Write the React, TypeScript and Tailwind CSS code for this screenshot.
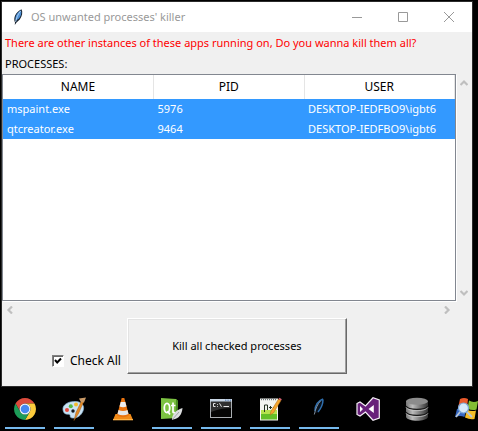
import { useState } from "react";
import type { ReactNode } from "react";

const rows = [
  { name: "mspaint.exe", pid: "5976", user: "DESKTOP-IEDFBO9\\igbt6" },
  { name: "qtcreator.exe", pid: "9464", user: "DESKTOP-IEDFBO9\\igbt6" },
];

function Feather({ className }: { className: string }) {
  return (
    <svg viewBox="0 0 16 18" className={className} aria-hidden="true">
      <path d="M4.8 17 L5 14.5 C3 10 5.5 4 11.5 1.2 C13 4 12.2 8 9.8 11.5 L6.5 14.5 Z" fill="#16202c" />
      <path d="M5.6 12.8 C4.6 8.5 7 4.6 11 2.2 C11.9 5 11 8.3 8.8 10.8 Z" fill="#4b8fd6" />
      <path d="M5.6 14 C6.4 10 8 6 10.6 3" stroke="#b4d4f2" strokeWidth="0.9" fill="none" />
    </svg>
  );
}

function DarkFeather() {
  return (
    <svg viewBox="0 0 24 24" className="size-6" aria-hidden="true">
      <path d="M7.5 16 C7 9 10 4 16.5 1.5 C17.5 6 15 11.5 11 15.5 Z" fill="#0a1420" />
      <path d="M8 14 C8 8.5 11 4 16 2 M11 15 C14 11.5 16 7 16 2.5" stroke="#2f6fae" strokeWidth="1.4" fill="none" />
      <path d="M7.3 17.5 C8.5 12 10.5 7 13.5 4" stroke="#8b9aa8" strokeWidth="0.9" fill="none" />
    </svg>
  );
}

function Chrome() {
  return (
    <svg viewBox="0 0 24 24" className="size-6" aria-hidden="true">
      <path d="M2.5 6.5 A11 11 0 0 1 21.5 6.5 L12 6.5 A5.5 5.5 0 0 0 7.2 14.7 Z" fill="#db4a3c" />
      <path d="M21.5 6.5 A11 11 0 0 1 12 23 L16.8 14.7 A5.5 5.5 0 0 0 12 6.5 Z" fill="#fccc3c" />
      <path d="M12 23 A11 11 0 0 1 2.5 6.5 L7.2 14.7 A5.5 5.5 0 0 0 16.8 14.7 Z" fill="#1d9c58" />
      <circle cx="12" cy="12" r="5.5" fill="#f4f6f8" />
      <circle cx="12" cy="12" r="4.3" fill="#4688f1" />
    </svg>
  );
}

function Paint() {
  return (
    <svg viewBox="0 0 24 24" className="size-6" aria-hidden="true">
      <path d="M1 13 C0 7 8 4 14 4.5 C20 5 23 9 21 14 C19 19 14 22 9.5 20.8 C7 20 9.5 17.5 6.5 17.2 C3 17.5 1.5 16 1 13 Z" fill="#c9e2f3" stroke="#8ab4d4" strokeWidth="0.7" />
      <circle cx="5" cy="13" r="2" fill="#e5483d" />
      <circle cx="8.8" cy="9.2" r="2" fill="#56b844" />
      <circle cx="14" cy="7.5" r="2" fill="#f3bb2e" />
      <circle cx="11" cy="14" r="1.7" fill="#10151b" />
      <path d="M12 23.5 L14 15.5 L19.5 4 L21.5 5 L16.5 16.5 Z" fill="#e38a25" stroke="#9a5a1c" strokeWidth="0.5" />
      <path d="M18.8 5 L17 1.5 L24 0.5 L22 5.5 Z" fill="#c99a67" />
    </svg>
  );
}

function Cone() {
  return (
    <svg viewBox="0 0 24 24" className="size-6" aria-hidden="true">
      <path d="M4.5 17 L19.5 17 L22 23 L2 23 Z" fill="#f08a17" />
      <path d="M10.7 1 L13.3 1 L18 18.5 Q12 22 6 18.5 Z" fill="#e9730f" />
      <path d="M9.7 5 L14.3 5 L15.5 9.5 Q12 11 8.5 9.5 Z" fill="#eceef0" />
      <path d="M7.5 13 Q12 15 16.5 13 L17.5 17 Q12 19.5 6.5 17 Z" fill="#e4e6e8" />
      <path d="M2 22 L22 22 L22 23.3 L2 23.3 Z" fill="#ffb347" />
    </svg>
  );
}

function Qt() {
  return (
    <svg viewBox="0 0 24 24" className="size-6" aria-hidden="true">
      <path d="M1 1 L16 2 L18 4 L17 21 L1 22 Z" fill="#7cc242" />
      <path d="M16 2 L18 4 L17 21 L15.5 20 Z" fill="#4b8f24" />
      <ellipse cx="7" cy="11" rx="2.7" ry="4.6" fill="none" stroke="#fff" strokeWidth="1.8" />
      <path d="M7.5 14 L10 17.5 M13 5.5 L13 15 Q13 16 15 15.5 M11 8.5 L15.5 8.5" fill="none" stroke="#fff" strokeWidth="1.7" />
      <path d="M12 23 C12 16 17 13 22.5 11 C22 17 19 22 13 22.5 Z" fill="#dcdedf" />
      <path d="M12 23 L19 15" stroke="#8e9295" strokeWidth="0.8" />
    </svg>
  );
}

function Console() {
  return (
    <svg viewBox="0 0 24 24" className="size-6" aria-hidden="true">
      <rect x="1.5" y="2.5" width="21" height="18" fill="#050505" stroke="#a9adb1" />
      <rect x="1" y="2" width="22" height="2.6" fill="#c9d6e5" />
      <path d="M16 3.2 H22" stroke="#4b76b0" strokeDasharray="1.4 1" />
      <path d="M2 5 H22 V11 Q12 11 2 15 Z" fill="#303030" />
      <path d="M6.5 6.5 H4.5 V9.5 H6.5 M8.5 7 V7.8 M8.5 9 V9.8 M10.5 6.3 L12.5 9.8 M14.5 9.5 H20" stroke="#e7e7e7" strokeWidth="1" fill="none" />
    </svg>
  );
}

function Notepad() {
  return (
    <svg viewBox="0 0 24 24" className="size-6" aria-hidden="true">
      <path d="M2 1.5 H20 V23.5 H2 Z" fill="#f3f5ef" />
      <path d="M3 13 H19 V22 H3 Z" fill="#b6e24d" />
      <path d="M3 17 H19 V22.5 H3 Z" fill="#64bf27" />
      <path d="M3 2.5 H19" stroke="#71777c" strokeWidth="1.6" strokeDasharray="1 1" />
      <path d="M6.5 15 V8 H9.5 V13 M11 10.5 H14 M12.5 9 V12 M15 10.5 H18 M16.5 9 V12" stroke="#253320" strokeWidth="1" fill="none" />
      <path d="M12 18 L13 14 L20.5 2 L23 3.5 L15.5 15.8 Z" fill="#f4a62e" stroke="#a66a17" strokeWidth="0.5" />
      <path d="M20.5 2 L21.5 0.8 L23.8 2.2 L23 3.5 Z" fill="#dc6574" />
    </svg>
  );
}

function VisualStudio() {
  return (
    <svg viewBox="0 0 24 24" className="size-6" aria-hidden="true">
      <path d="M1 6.5 L4 5 L9.5 9 L17 0.8 L23.3 3 V21 L17 23.2 L9.5 15 L4 19 L1 17.5 Z" fill="#68217a" stroke="#f5eff7" strokeWidth="1.2" />
      <path d="M4 9 V15 L7 12 Z M17.8 8 V16 L12.5 12 Z" fill="#fff" />
    </svg>
  );
}

function Database() {
  return (
    <svg viewBox="0 0 24 24" className="size-6" aria-hidden="true">
      <defs>
        <linearGradient id="metal">
          <stop stopColor="#747474" />
          <stop offset=".3" stopColor="#bcbcbc" />
          <stop offset="1" stopColor="#303030" />
        </linearGradient>
      </defs>
      <path d="M1 4 V20 C3 25 21 25 23 20 V4 Z" fill="url(#metal)" />
      <ellipse cx="12" cy="4.2" rx="11" ry="3.5" fill="#8c8c8c" />
      <path d="M1 9 C3 13.5 21 13.5 23 9 M1 15 C3 19.5 21 19.5 23 15" stroke="#1a1a1a" strokeWidth="1.4" fill="none" />
      <path d="M1 10.3 C3 14.8 21 14.8 23 10.3 M1 16.3 C3 20.8 21 20.8 23 16.3" stroke="#c8c8c8" strokeWidth="0.8" fill="none" />
    </svg>
  );
}

function WindowsSearch() {
  return (
    <svg viewBox="0 0 24 24" className="size-6" aria-hidden="true">
      <path d="M6 2 Q10 0 14 2 L13 11 Q8 9 4 11 Z" fill="#e9592b" />
      <path d="M15 3.5 Q19 6 24 4 L22.5 12.5 Q18 14 13.5 11.5 Z" fill="#83bd34" />
      <path d="M3 12 Q7 10 12 12 L10.5 20 Q6 18 1 20 Z" fill="#3768c4" />
      <path d="M13 12.5 Q17 15 22 13.5 L20.5 22 Q16 23 11 20.5 Z" fill="#f5bd27" />
      <path d="M6 15 L2 20 M13 15 L18 20" stroke="#b9c7d6" strokeWidth="1.8" />
      <circle cx="9.5" cy="11" r="5" fill="#d7eafa" stroke="#7ca8d8" strokeWidth="1.2" />
    </svg>
  );
}

const tasks: { label: string; open: boolean; icon: ReactNode }[] = [
  { label: "Chrome", open: true, icon: <Chrome /> },
  { label: "Paint", open: true, icon: <Paint /> },
  { label: "VLC", open: false, icon: <Cone /> },
  { label: "Qt Creator", open: true, icon: <Qt /> },
  { label: "Command Prompt", open: true, icon: <Console /> },
  { label: "Notepad++", open: true, icon: <Notepad /> },
  { label: "Process killer", open: true, icon: <DarkFeather /> },
  { label: "Visual Studio", open: false, icon: <VisualStudio /> },
  { label: "Database", open: false, icon: <Database /> },
  { label: "Windows search", open: false, icon: <WindowsSearch /> },
];

function Arrow({ d, label }: { d: string; label: string }) {
  return (
    <button type="button" aria-label={label} className="flex size-4 items-center justify-center">
      <svg viewBox="0 0 8 8" className="size-2" aria-hidden="true">
        <path d={d} fill="none" stroke="#bfbfbf" strokeWidth="2.2" />
      </svg>
    </button>
  );
}

export default function App() {
  const [checked, setChecked] = useState(true);
  return (
    <div className="flex min-h-screen flex-col overflow-hidden bg-black font-['Noto_Sans','Open_Sans',sans-serif] text-[11px] text-black">
      <main className="mt-px mr-[5px] ml-px border border-[#2b2b2b] bg-[#f0f0f0]">
        <header className="flex h-[30px] items-center bg-white pl-2">
          <Feather className="h-[18px] w-4" />
          <h1 className="ml-[5px] grow text-[#999999]">OS unwanted processes' killer</h1>
          <button type="button" aria-label="Minimize" className="flex h-full w-[46px] items-center justify-center">
            <svg viewBox="0 0 10 10" className="size-2.5"><path d="M0 5.5H10" stroke="#999" /></svg>
          </button>
          <button type="button" aria-label="Maximize" className="flex h-full w-[46px] items-center justify-center">
            <svg viewBox="0 0 10 10" className="size-2.5"><path d="M.5 .5H9.5V9.5H.5Z" stroke="#999" fill="none" /></svg>
          </button>
          <button type="button" aria-label="Close" className="flex h-full w-[46px] items-center justify-center">
            <svg viewBox="0 0 10 10" className="size-2.5"><path d="M0 0L10 10M10 0L0 10" stroke="#999" /></svg>
          </button>
        </header>
        <p className="px-[3px] pt-px leading-5 text-[#ff0000]">There are other instances of these apps running on, Do you wanna kill them all?</p>
        <h2 className="px-[3px] pt-px leading-5">PROCESSES:</h2>
        <div className="flex">
          <div className="h-[227px] min-w-0 grow border border-[#828790] bg-white shadow-[1px_1px_0_#ffffff]">
            <table className="w-full table-fixed border-collapse">
              <thead className="text-xs">
                <tr className="h-6">
                  <th className="border-r border-[#e5e5e5] p-0 font-normal">NAME</th>
                  <th className="border-r border-[#e5e5e5] p-0 font-normal">PID</th>
                  <th className="border-r border-[#e5e5e5] p-0 font-normal">USER</th>
                </tr>
              </thead>
              <tbody className="bg-[#3399ff] text-white">
                {rows.map((r) => (
                  <tr key={r.name} className="h-5">
                    <td className="p-0 pl-1">{r.name}</td>
                    <td className="p-0 pl-1">{r.pid}</td>
                    <td className="p-0 pl-1 whitespace-nowrap">{r.user}</td>
                  </tr>
                ))}
              </tbody>
            </table>
          </div>
          <div className="flex w-[17px] flex-col items-end justify-between pt-px">
            <Arrow d="M0.5 6L4 2.5L7.5 6" label="Scroll up" />
            <Arrow d="M0.5 2L4 5.5L7.5 2" label="Scroll down" />
          </div>
        </div>
        <div className="mr-[17px] flex h-[17px] items-center justify-between">
          <Arrow d="M6 0.5L2.5 4L6 7.5" label="Scroll left" />
          <Arrow d="M2 0.5L5.5 4L2 7.5" label="Scroll right" />
        </div>
        <div className="flex items-end pb-3 pl-[50px]">
          <label className="flex items-center gap-1.5 pb-[5px] text-xs">
            <span className="relative flex size-3 border border-t-[#808080] border-r-white border-b-white border-l-[#808080]">
              <input
                type="checkbox"
                checked={checked}
                onChange={(e) => setChecked(e.target.checked)}
                className="peer size-full appearance-none border-t border-l border-[#696969] bg-white"
              />
              <svg viewBox="0 0 8 8" className="pointer-events-none absolute top-px left-px hidden size-2 peer-checked:block">
                <path d="M1 3L3.2 5.5L7 1.5" fill="none" stroke="#000" strokeWidth="2" />
              </svg>
            </span>
            Check All
          </label>
          <button
            type="button"
            className="ml-1.5 h-14 w-[220px] border border-t-white border-r-[#696969] border-b-[#696969] border-l-white shadow-[inset_-1px_-1px_0_#a0a0a0,inset_1px_1px_0_#e3e3e3]"
          >
            Kill all checked processes
          </button>
        </div>
      </main>
      <nav aria-label="Taskbar" className="flex h-11 gap-[9px] pl-[5px]">
        {tasks.map((t) => (
          <button
            key={t.label}
            type="button"
            aria-label={t.label}
            className={
              t.open
                ? "flex h-[42px] w-10 shrink-0 justify-center border-b-2 border-[#76b9ed] pt-2.5"
                : "flex h-[42px] w-10 shrink-0 justify-center pt-2.5"
            }
          >
            {t.icon}
          </button>
        ))}
      </nav>
    </div>
  );
}
